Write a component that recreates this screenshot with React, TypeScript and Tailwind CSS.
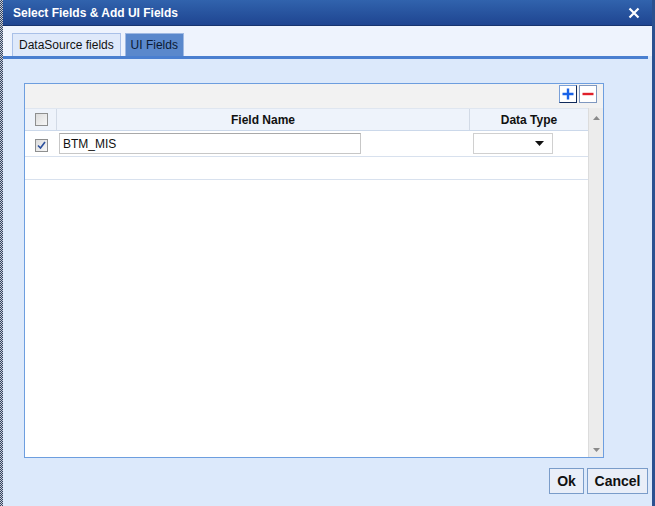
import React from 'react';

function Check({ checked }: { checked?: boolean }) {
  return (
    <div className="w-[13px] h-[13px] border border-[#8e8f8f] bg-gradient-to-br from-[#dcdcdc] to-[#f7f7f7] flex items-center justify-center">
      {checked && (
        <svg width="9" height="9" viewBox="0 0 9 9">
          <path d="M1 4.5 L3.5 7 L8 1" stroke="#2b4f9c" strokeWidth="1.6" fill="none" />
        </svg>
      )}
    </div>
  );
}

export default function App() {
  return (
    <div className="w-[655px] h-[506px] flex bg-[#dce9fb] overflow-hidden text-black" style={{ fontFamily: '"Liberation Sans", Arial, sans-serif' }}>
      <div className="w-[3px] h-full bg-[repeating-conic-gradient(#344463_0%_25%,#c7ccd6_0%_50%)] bg-[length:2px_2px]" />
      <div className="flex-1 flex flex-col min-w-0">
        {/* title bar */}
        <div className="h-[26px] flex items-center justify-between bg-gradient-to-b from-[#3163ad] to-[#1f4591] border-b border-[#17346e] pl-[10px] pr-[12px]">
          <span className="text-white font-bold text-[12px]">Select Fields &amp; Add UI Fields</span>
          <svg width="12" height="12" viewBox="0 0 12 12">
            <path d="M1.5 1.5 L10.5 10.5 M10.5 1.5 L1.5 10.5" stroke="#fff" strokeWidth="2.2" />
          </svg>
        </div>
        {/* tabs */}
        <div className="h-[30px] bg-[#eef3fd] flex items-end gap-[4px] pl-[9px] pr-[4px]">
          <div className="h-[23px] px-[6px] flex items-center bg-[#dfe9fa] border border-b-0 border-[#a9c0e8] text-[12px] text-[#111]">
            DataSource fields
          </div>
          <div className="h-[23px] w-[59px] flex items-center justify-center bg-[#5a88cc] border border-b-0 border-[#9fb9e3] text-[12px] text-[#0b1a33]">
            UI Fields
          </div>
        </div>
        <div className="h-[3px] bg-[#4a7fd0] mr-[4px]" />
        {/* body */}
        <div className="flex-1 flex flex-col pt-[24px] pl-[21px] pr-[49px] pb-[12px]">
          <div className="w-[580px] h-[375px] border border-[#6d9edf] flex flex-col bg-white">
            <div className="h-[24px] bg-[#f2f2f2] flex items-start justify-end gap-[2px] pr-[6px] pt-[1px]">
              <div className="w-[18px] h-[18px] border border-[#102a5a] border-t-[#7aa0d8] border-l-[#7aa0d8] bg-white flex items-center justify-center">
                <svg width="12" height="12" viewBox="0 0 12 12">
                  <path d="M6 0.5 V11.5 M0.5 6 H11.5" stroke="#1a63e8" strokeWidth="2.4" />
                </svg>
              </div>
              <div className="w-[18px] h-[18px] border border-[#7f98c0] bg-white flex items-center justify-center">
                <svg width="12" height="12" viewBox="0 0 12 12">
                  <path d="M0.5 6 H11.5" stroke="#e0202a" strokeWidth="2.4" />
                </svg>
              </div>
            </div>
            <div className="flex-1 flex min-h-0">
              <div className="flex-1 flex flex-col">
                <div className="h-[23px] flex bg-[#eef3fb] border-b border-[#cbd8ea] border-t border-t-[#dfe6f0] text-[12px] font-bold text-[#111]">
                  <div className="w-[32px] flex items-center justify-center border-r border-[#d2dae6] pl-[2px]">
                    <Check />
                  </div>
                  <div className="w-[413px] flex items-center justify-center border-r border-[#d2dae6]">Field Name</div>
                  <div className="flex-1 flex items-center justify-center">Data Type</div>
                </div>
                <div className="h-[26px] flex border-b border-[#d8e1ee]">
                  <div className="w-[32px] flex items-center justify-center pt-[4px]">
                    <Check checked />
                  </div>
                  <div className="w-[413px] flex items-center pl-[2px]">
                    <div className="w-[302px] h-[21px] border border-[#c7c7c7] border-t-[#a9a9a9] bg-white text-[12px] flex items-center pl-[3px] text-[#111]">BTM_MIS</div>
                  </div>
                  <div className="flex-1 flex items-center pl-[3px]">
                    <div className="w-[80px] h-[21px] border border-[#d0d0d0] bg-white flex items-center justify-end pr-[8px]">
                      <svg width="9" height="5" viewBox="0 0 9 5">
                        <path d="M0 0 H9 L4.5 5 Z" fill="#111" />
                      </svg>
                    </div>
                  </div>
                </div>
                <div className="h-[23px] border-b border-[#d8e1ee]" />
              </div>
              <div className="w-[15px] bg-[#ececec] border-l border-[#dcdcdc] flex flex-col items-center justify-between pt-[8px] pb-[5px]">
                <svg width="7" height="4" viewBox="0 0 7 4"><path d="M0 4 L3.5 0 L7 4 Z" fill="#8a8a8a" /></svg>
                <svg width="7" height="4" viewBox="0 0 7 4"><path d="M0 0 L7 0 L3.5 4 Z" fill="#8a8a8a" /></svg>
              </div>
            </div>
          </div>
          <div className="flex justify-end gap-[3px] mt-[10px] -mr-[45px]">
            <button className="h-[26px] w-[35px] border border-[#7a9cc9] bg-[#e9eef8] text-[14px] font-bold text-[#111]">Ok</button>
            <button className="h-[26px] w-[61px] border border-[#7a9cc9] bg-[#e9eef8] text-[14px] font-bold text-[#111]">Cancel</button>
          </div>
        </div>
      </div>
      <div className="w-[3px] h-full bg-[#2b5190]" />
    </div>
  );
}
